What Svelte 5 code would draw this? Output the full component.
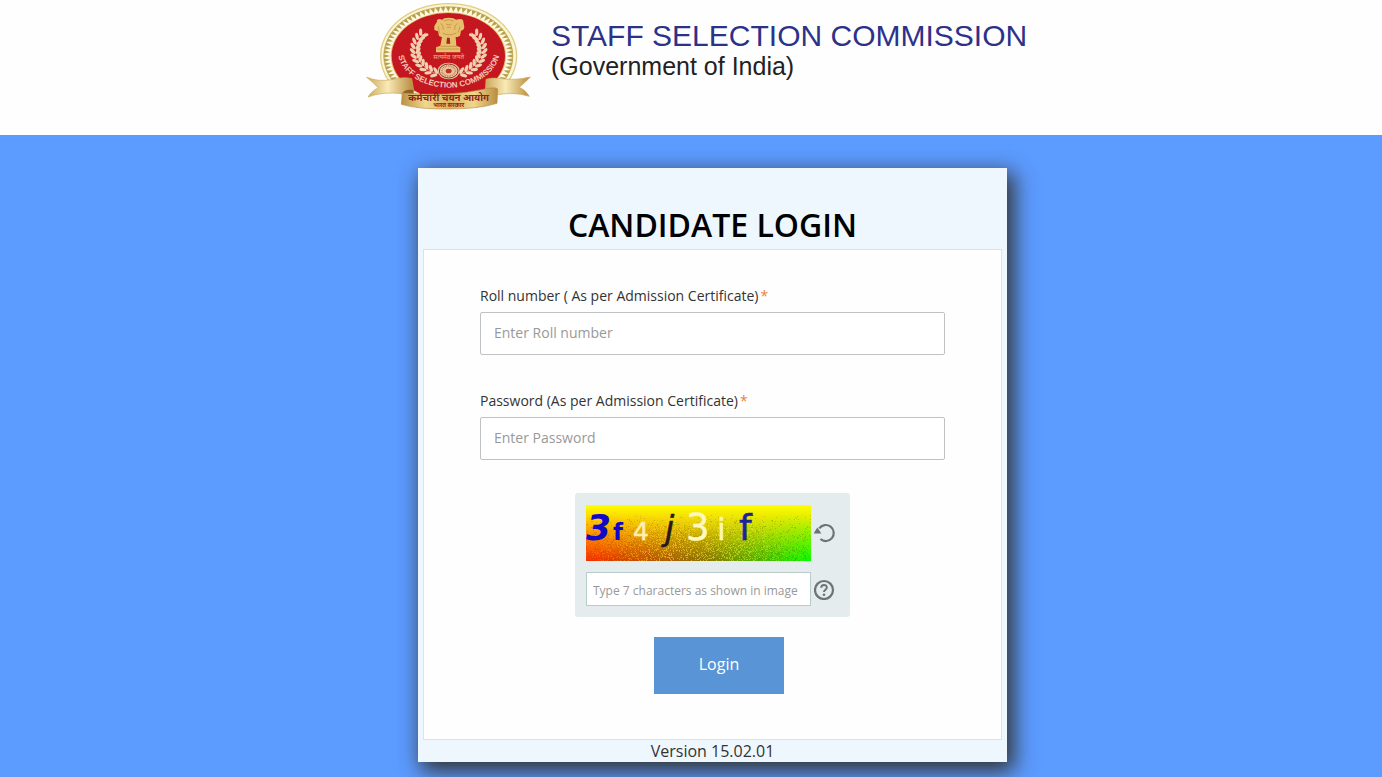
<script>
  let rollNumber = '';
  let password = '';
  let captcha = '';

  const round = (n) => Math.round(n * 10) / 10;

  // gold teeth round the seal
  const teeth = [];
  for (let i = 0; i < 76; i++) {
    const at = (angle, rx, ry) => `${round(280 + rx * Math.cos(angle))},${round(168 + ry * Math.sin(angle))}`;
    const a = (i / 76) * Math.PI * 2;
    teeth.push(`${at(a - 0.037, 194, 148)} ${at(a + 0.037, 194, 148)} ${at(a, 175, 133)}`);
  }

  // laurel leaves, one side; the other side is mirrored
  const leaves = [];
  for (let i = 0; i < 11; i++) {
    const a = ((112 + i * 10.5) * Math.PI) / 180;
    const x = round(280 + 99 * Math.cos(a));
    const y = round(150 + 76 * Math.sin(a));
    const turn = (a * 180) / Math.PI + 90;
    leaves.push({ x, y, turn });
  }

  let seed = 7;
  const random = () => {
    seed = (seed * 16807) % 2147483647;
    return seed / 2147483647;
  };
  let speckle = '';
  let darkSpeckle = '';
  for (let y = 10; y < 56; y++) {
    for (let x = 0; x < 225; x++) {
      const r = random();
      if (r < 0.22) speckle += `M${x} ${y}h1v1h-1z`;
      else if (r > 1 - y / 300) darkSpeckle += `M${x} ${y}h1v1h-1z`;
    }
  }

  const handleSubmit = () => {
    password = '';
    captcha = '';
  };
</script>

<header>
  <div class="banner">
    <svg class="seal" viewBox="30 0 498 336" role="img" aria-label="Staff Selection Commission seal">
      <defs>
        <linearGradient id="gold" x1="0" x2="1">
          <stop offset="0" stop-color="#b99145" />
          <stop offset="0.25" stop-color="#f0d88f" />
          <stop offset="0.5" stop-color="#d8b362" />
          <stop offset="0.75" stop-color="#f0d68c" />
          <stop offset="1" stop-color="#b88e40" />
        </linearGradient>
        <linearGradient id="tail" x1="0" x2="1">
          <stop offset="0" stop-color="#cda85a" />
          <stop offset="0.45" stop-color="#f9eab6" />
          <stop offset="1" stop-color="#b58a3c" />
        </linearGradient>
        <path id="motto" d="M128 150 A153 113 0 0 0 434 150" />
        <g id="laurel">
          <path d="M244 221 A96 76 0 0 1 212 98" fill="none" stroke="#ecc9a5" stroke-width="2" />
          {#each leaves as leaf}
            <g transform="translate({leaf.x} {leaf.y}) rotate({leaf.turn})">
              <ellipse cx="4" cy="-8" rx="11" ry="5" transform="rotate(-38 4 -8)" />
              <ellipse cx="4" cy="8" rx="11" ry="5" transform="rotate(38 4 8)" />
            </g>
          {/each}
        </g>
      </defs>
      <ellipse cx="281" cy="168" rx="206" ry="159" fill="#e1cd85" />
      <ellipse cx="281" cy="168" rx="202" ry="155" fill="#fbf5d4" />
      <ellipse cx="280" cy="168" rx="195" ry="149" fill="#d9c47b" />
      <ellipse cx="280" cy="168" rx="192" ry="146" fill="#fdf8df" />
      {#each teeth as points}
        <polygon {points} fill="#b7a04e" />
      {/each}
      <ellipse cx="280" cy="168" rx="173" ry="131" fill="#e2be70" />
      <ellipse cx="280" cy="168" rx="170" ry="129" fill="#c5171f" />
      <g fill="#f0d0b0">
        <use href="#laurel" />
        <use href="#laurel" transform="translate(562 0) scale(-1 1)" />
      </g>
      <g fill="#e7c06d">
        <path d="M246 65 Q244 57 254 57 L262 59 Q265 53 281 53 Q297 53 303 59 L315 57 Q325 58 325 65 L328 82 Q327 91 318 92 L315 107 L308 111 L302 111 L304 137 L316 142 V157 H243 V142 L256 137 L261 112 L252 108 L249 94 L238 90 L238 78 Z" />
      </g>
      <path d="M266 63 Q280 55 296 63 M257 70 Q266 76 265 90 M307 70 Q297 76 299 90 M273 72 Q281 78 290 72 M276 82 H288 M263 99 Q280 110 304 99 M257 139 H306 M246 147 H313 M250 79 L253 99 M315 79 L310 98" fill="none" stroke="#b98540" stroke-width="2" />
      <path d="M276 113 L274 131 H286 L284 113 Z" fill="#a32620" />
      <text x="281" y="177" text-anchor="middle" class="devanagari" font-size="19" fill="#f2b38b">सत्यमेव जयते</text>
      <ellipse cx="281" cy="213" rx="33" ry="25" fill="#e7c59a" />
      <ellipse cx="281" cy="213" rx="28" ry="21" fill="none" stroke="#933326" stroke-width="3" />
      <ellipse cx="281" cy="213" rx="20" ry="15" fill="none" stroke="#ba6954" stroke-width="5" stroke-dasharray="2 3" />
      <ellipse cx="281" cy="213" rx="9" ry="7" fill="#bd3028" />
      <text class="motto"><textPath href="#motto" startOffset="50%" text-anchor="middle">STAFF SELECTION COMMISSION</textPath></text>

      <path d="M35 232 Q70 246 109 239 Q148 229 170 236 L176 270 L142 281 Q82 274 39 291 Q51 271 70 264 Q54 246 35 232 Z" fill="url(#tail)" stroke="#cda85b" stroke-width="2" />
      <path d="M526 231 Q478 243 432 235 Q409 232 393 238 L391 270 L428 284 Q478 275 523 289 Q512 270 493 262 Q512 246 526 231 Z" fill="url(#tail)" stroke="#cda85b" stroke-width="2" />
      <path d="M142 280 Q149 266 176 270 L176 282 Z M391 270 Q421 264 428 279 L391 284 Z" fill="#8d5d24" />
      <path d="M142 279 Q281 291 391 267 Q421 260 428 267 L426 310 Q372 327 280 327 Q188 328 139 313 Z" fill="url(#gold)" stroke="#b98c40" stroke-width="2" />
      <text x="281" y="303" text-anchor="middle" class="devanagari" font-size="29" font-weight="700" fill="#8a271a">कर्मचारी चयन आयोग</text>
      <text x="281" y="322" text-anchor="middle" class="devanagari" font-size="18" font-weight="700" fill="#8a271a">भारत सरकार</text>
    </svg>
    <div class="banner-text">
      <p class="org">STAFF SELECTION COMMISSION</p>
      <p class="gov">(Government of India)</p>
    </div>
  </div>
</header>

<main>
  <div class="card">
    <h1>CANDIDATE LOGIN</h1>
    <form class="panel" on:submit|preventDefault={handleSubmit}>
      <div class="field">
        <label for="roll">Roll number ( As per Admission Certificate)<span class="required">*</span></label>
        <input id="roll" type="text" placeholder="Enter Roll number" bind:value={rollNumber} />
      </div>
      <div class="field">
        <label for="password">Password (As per Admission Certificate)<span class="required">*</span></label>
        <input id="password" type="password" placeholder="Enter Password" bind:value={password} />
      </div>

      <div class="captcha">
        <svg class="captcha-image" viewBox="0 0 225 56" role="img" aria-label="Captcha image">
          <defs>
            <linearGradient id="across">
              <stop offset="0" stop-color="#ff2800" />
              <stop offset="0.3" stop-color="#bd5700" />
              <stop offset="0.55" stop-color="#887b00" />
              <stop offset="0.75" stop-color="#50b800" />
              <stop offset="1" stop-color="#00ff00" />
            </linearGradient>
            <linearGradient id="down" x2="0" y2="1">
              <stop offset="0" stop-color="#ffff00" />
              <stop offset="0.2" stop-color="#ffee00" stop-opacity="0.9" />
              <stop offset="1" stop-color="#ffdd00" stop-opacity="0" />
            </linearGradient>
            <linearGradient id="speckle-fade">
              <stop offset="0" stop-color="#ffb000" stop-opacity="0.15" />
              <stop offset="0.35" stop-color="#ffd030" stop-opacity="0.6" />
              <stop offset="0.75" stop-color="#d8f030" stop-opacity="0.5" />
              <stop offset="1" stop-color="#80ff00" stop-opacity="0.1" />
            </linearGradient>
          </defs>
          <rect width="225" height="56" fill="url(#across)" />
          <rect width="225" height="56" fill="url(#down)" />
          <path d={speckle} fill="url(#speckle-fade)" />
          <path d={darkSpeckle} fill="#705000" fill-opacity="0.25" />
          <g class="captcha-text">
            <text x="0" y="35" font-size="36" font-weight="700" font-style="italic" fill="#1208c8">3</text>
            <text x="27" y="35" font-size="23" font-weight="700" fill="#1208c8">f</text>
            <text x="47" y="35" font-size="25" fill="#fff0b0" stroke="#fff0b0" stroke-width="0.5">4</text>
            <text x="79" y="35" font-size="33" font-style="italic" fill="#281820" stroke="#281820" stroke-width="0.5">j</text>
            <text x="100" y="35" font-size="37" fill="#fff8c0" stroke="#fff8c0" stroke-width="0.5">3</text>
            <text x="131" y="35" font-size="31" fill="#fff8b0" stroke="#fff8b0" stroke-width="0.5">i</text>
            <text x="153" y="35" font-size="36" fill="#1b22a0" stroke="#1b22a0" stroke-width="0.5">f</text>
          </g>
        </svg>
        <button type="button" class="icon-button" aria-label="Refresh captcha">
          <svg viewBox="0 0 22 22">
            <path d="M5.2 6.4 A8 8 0 1 1 6.4 17" fill="none" stroke="#6d7272" stroke-width="2.2" />
            <path d="M-0.5 11.6 L3.4 5.4 L7.4 11.6 Z" fill="#6d7272" />
          </svg>
        </button>
        <input type="text" aria-label="Captcha" placeholder="Type 7 characters as shown in image" bind:value={captcha} />
        <button type="button" class="icon-button" aria-label="Captcha help">
          <svg viewBox="0 0 22 22">
            <circle cx="10" cy="12" r="9" fill="none" stroke="#6d7272" stroke-width="2.2" />
            <path d="M7.2 9.8 C7.2 6 12.8 6 12.8 9.6 C12.8 11.8 10 11.8 10 14.1" fill="none" stroke="#6d7272" stroke-width="2" />
            <circle cx="10" cy="16.8" r="1.3" fill="#6d7272" />
          </svg>
        </button>
      </div>

      <button type="submit" class="login">Login</button>
    </form>
    <p class="version">Version 15.02.01</p>
  </div>
</main>

<style>
  :global(body) {
    background: #5c9bff;
    font-family: "Open Sans", "Noto Sans", sans-serif;
    font-size: 14px;
    color: #333;
  }

  header {
    background: #fefefe;
    height: 135px;
  }

  .banner {
    display: flex;
    gap: 20px;
    max-width: 668px;
    margin: 0 auto;
    padding-left: 16px;
  }

  .seal {
    flex: none;
    width: 166px;
    height: 112px;
  }

  .devanagari {
    font-family: "Noto Sans Devanagari", "Noto Sans", sans-serif;
  }

  .motto {
    font-family: "Liberation Sans", Arial, sans-serif;
    font-size: 24px;
    font-weight: 700;
    fill: #f3c9b8;
  }

  .banner-text {
    font-family: "Liberation Sans", Arial, sans-serif;
    white-space: nowrap;
    padding-top: 20px;
  }

  .banner-text p {
    margin: 0;
    line-height: 31px;
  }

  .org {
    font-size: 30px;
    color: #2c3288;
  }

  .gov {
    font-size: 25px;
    color: #222;
  }

  main {
    display: flex;
    justify-content: center;
    padding: 33px 0 15px 43px;
  }

  .card {
    box-sizing: border-box;
    width: 100%;
    max-width: 589px;
    padding: 34px 5px 0;
    background: #eef7fe;
    box-shadow: 5px 7px 20px 2px #333;
  }

  h1 {
    margin: 0 0 2px;
    font-size: 32px;
    line-height: 45px;
    font-weight: 600;
    text-align: center;
    color: #000;
  }

  .panel {
    display: flex;
    flex-direction: column;
    padding: 36px 56px 45px;
    background: #fefefe;
    border: 1px solid #dde2e5;
  }

  .field {
    margin-bottom: 36px;
  }

  label {
    display: block;
    line-height: 20px;
    margin-bottom: 6px;
  }

  .required {
    margin-left: 2px;
    color: #e8833a;
  }

  input {
    box-sizing: border-box;
    width: 100%;
    font-family: inherit;
    background: #fff;
  }

  input::placeholder {
    color: #999;
    opacity: 1;
  }

  .field input {
    display: block;
    height: 43px;
    padding: 0 13px 2px;
    border: 1px solid #bfc2c4;
    border-radius: 2px;
    font-size: 14px;
  }

  .captcha {
    box-sizing: border-box;
    display: grid;
    grid-template-columns: 225px 22px;
    align-items: center;
    align-self: center;
    gap: 11px 3px;
    width: 275px;
    margin-top: -3px;
    padding: 12px 11px 11px;
    background: #e5eced;
    border-radius: 3px;
  }

  .captcha-image {
    display: block;
    width: 100%;
  }

  .captcha-text {
    font-family: "DejaVu Sans", sans-serif;
  }

  .captcha input {
    height: 34px;
    padding: 2px 6px 0;
    border: 1px solid #b9cbcb;
    font-size: 12px;
  }

  .icon-button {
    width: 22px;
    height: 22px;
    padding: 0;
    border: none;
    background: none;
    cursor: pointer;
  }

  .icon-button svg {
    display: block;
  }

  .login {
    align-self: center;
    width: 130px;
    height: 57px;
    margin: 20px 0 0 13px;
    padding: 0 0 3px;
    border: none;
    background: #5894d6;
    color: #fff;
    font-family: inherit;
    font-size: 16px;
    font-weight: 500;
    cursor: pointer;
  }

  .login:hover {
    background: #4884c6;
  }

  .version {
    margin: 0;
    font-size: 16px;
    line-height: 22px;
    text-align: center;
  }
</style>
